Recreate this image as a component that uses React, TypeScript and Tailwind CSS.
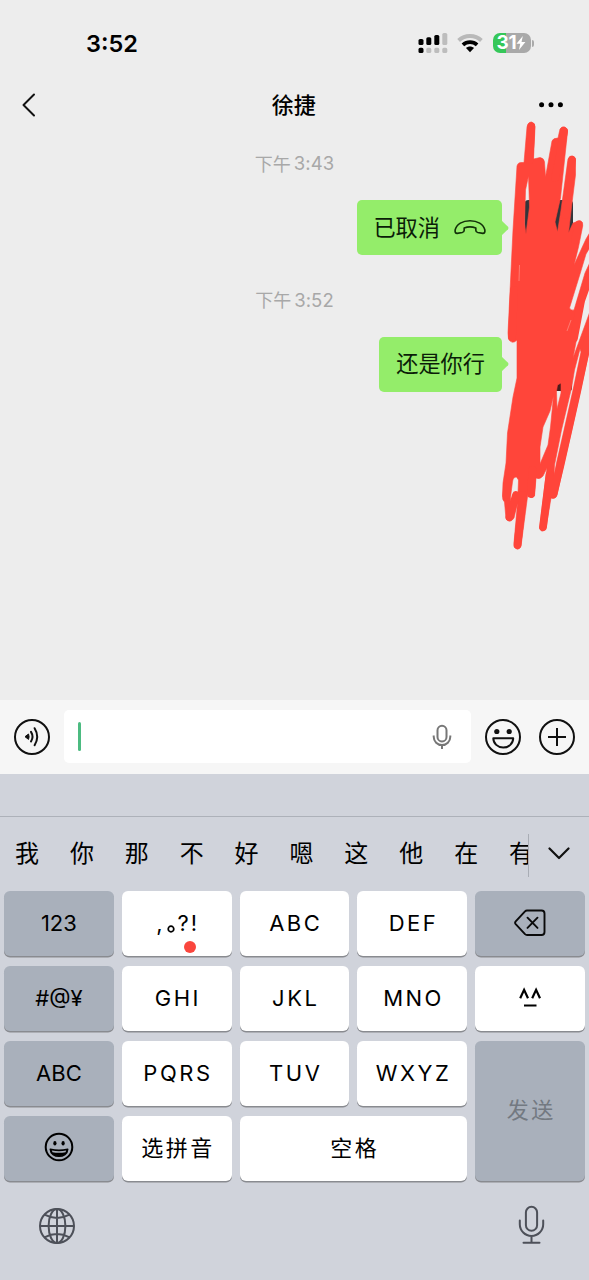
import React from 'react';

const CANDIDATES = ['我', '你', '那', '不', '好', '嗯', '这', '他', '在', '有'];

function StatusBar() {
  return (
    <div className="flex h-[78px] shrink-0 items-start justify-between pr-[55px] pl-[86px]">
      <span className="mt-[30px] text-[23.500px] leading-[28px] font-semibold">3:52</span>
      <div className="mt-[32px] flex items-start">
        <svg className="mt-px" width="30" height="21" viewBox="0 0 30 21">
          <g fill="#000">
            <rect x="0.5" y="6" width="5" height="6" rx="1.6" />
            <rect x="8.3" y="4.2" width="5" height="7.8" rx="1.6" />
            <rect x="16.3" y="2" width="5" height="10" rx="1.6" />
            <rect x="0.5" y="14.8" width="5" height="5.2" rx="1.6" />
          </g>
          <g fill="#bdbdbd">
            <rect x="24.3" y="0" width="5" height="12" rx="1.6" />
            <rect x="8.3" y="14.8" width="5" height="5.2" rx="1.6" />
            <rect x="16.3" y="14.8" width="5" height="5.2" rx="1.6" />
            <rect x="24.3" y="14.8" width="5" height="5.2" rx="1.6" />
          </g>
        </svg>
        <svg className="mt-[2px] ml-[9px]" width="26" height="19" viewBox="0 0 26 19" fill="none">
          <path d="M1.600 6.400C8 .6 18 .6 24.400 6.400" stroke="#b9b9b9" strokeWidth="4" />
          <path d="M5.900 10.900C10 7.200 16 7.200 20.100 10.900" stroke="#000" strokeWidth="3.800" />
          <path d="M9 14c2.300-2 5.700-2 8 0l-4 4.300z" fill="#000" />
        </svg>
        <div className="mt-px ml-[10px] flex h-[20px] w-[38px] items-center justify-center rounded-[7px] bg-linear-to-r from-[#35c759] from-34% to-[#a9a9a9] to-34% text-white">
          <span className="text-[19px] leading-[20px] font-bold tracking-[-0.300px]">31</span>
          <svg width="10" height="14" viewBox="0 0 9 13" fill="#fff">
            <path d="M6.200 0 .3 7.200h3.500L2.600 13l6-7.500H5z" />
          </svg>
        </div>
        <div className="mt-[8px] ml-[1.500px] h-[7px] w-[2px] rounded-r-full bg-[#aaa]" />
      </div>
    </div>
  );
}

function Header() {
  return (
    <div className="flex h-[54px] shrink-0 items-center justify-between pr-[25.500px] pl-[21px]">
      <svg width="16" height="26" viewBox="0 0 16 26" fill="none" stroke="#111" strokeWidth="2" strokeLinecap="round" strokeLinejoin="round">
        <path d="M13 2.500 2.500 13 13 23.500" />
      </svg>
      <h1 className="ml-[11px] text-[22px] leading-[30px] font-medium">徐捷</h1>
      <svg width="24" height="6" viewBox="0 0 24 6">
        <circle cx="2.600" cy="2.800" r="2.500" />
        <circle cx="12" cy="2.800" r="2.500" />
        <circle cx="21.400" cy="2.800" r="2.500" />
      </svg>
    </div>
  );
}

function Time({ value }: { value: string }) {
  return (
    <div className="flex h-[28px] items-center justify-center gap-[3px] text-[18.500px] text-[#a8a8a8]">
      <span className="text-[18px]">下午</span>
      <span className="tracking-[0.100px]">{value}</span>
    </div>
  );
}

function Bubble({ children }: { children: React.ReactNode }) {
  return (
    <div className="flex items-center justify-end pr-[80px]">
      <div className="flex h-[55px] items-center rounded-[5px] bg-[#94ed6a] px-[17px] text-[22.200px] text-[#0b1d08]">
        {children}
      </div>
      <svg className="-ml-px" width="8" height="16" viewBox="0 0 8 16" fill="#94ed6a">
        <path d="M0 0 7 6.700Q8 8 7 9.300L0 16z" />
      </svg>
    </div>
  );
}

function Scribble() {
  return (
    <svg className="pointer-events-none absolute top-0 left-0" width="589" height="600" viewBox="0 0 589 600">
      <rect x="524.500" y="200" width="48.500" height="54" rx="4" fill="#33353a" />
      <rect x="524.500" y="340" width="47.500" height="51" rx="3" fill="#4a1c1c" />
      <path
        fill="#ff453a"
        fillRule="evenodd"
        stroke="#ff453a"
        strokeWidth="0.600"
        strokeLinejoin="round"
        d="M517 166Q518 162 522 162.500L524 162.500 527 127Q528 122 531.500 122 535 123 535 127L533.500 159 540 157.500Q544 158 544.500 162L545.500 177 552 141Q553 138 558 138L560 129Q562 126 565 127 568 129 567.500 132L560.500 198 555 222 557.500 232 561 210 568 159Q570 155 573 156 576 157 575.500 162L575.500 175 572 203 568.500 233 573 223 576 222Q580 219 582.500 222.500L582.700 226 578.500 247 574 265 586 239 592 229V244L586 254 580 274 569.500 308Q571 311 574 310L585 273 592 258V276L588 284 582.500 308 573 358 592 306V343L589 352 580.500 390 571.700 430 564 463 557 495Q555 500 551 498L546 528Q544 532 541.500 531 539 529 540 526L547 468 543 476Q540 480 536 478L534.500 496Q532 499 528.500 496L528 493 521 546Q518 552 514.500 547L514 543 517.500 503 514 518Q510 524 506 519L504.500 502Q502 500 502.500 495L503 483 506 463 507.500 433 513 397 517 378 517 340Q512 345 508.500 339L508 333 513 230Z
        M528.500 176 525.500 190 524.500 224 526 234 529.500 207Z
        M580 349 574.500 370 571.500 388 561.500 430 554.500 465 554 476 556.500 463 564 430 573 390 581 352Z
        M553.500 396 550 411 543 427 540 447 540 464 548 445 550.500 427Z
        M557.500 385 561 383 561 393 557 409 556.500 391Z
        M516.500 477Q513 477 512.500 482L510.500 497 511.500 509 518 493 518.500 480Z"
      />
      <path
        fill="none"
        stroke="#ff453a"
        strokeWidth="7.800"
        strokeLinecap="round"
        strokeLinejoin="round"
        d="M531.300 126.500 529.500 160M564 131 560 155 555 178M572 160 568.500 190 565 215M512 337 514 290M578.500 225 575 240M592 270 581 301 574 338M588 340 577 392 560.500 465 553.500 494M549.500 475 543 527M531 494 532.500 470M517.500 545 523 495M509.500 517 516 495M506.500 495 508 478"
      />
      <path d="m519 281 .5-16M567 331l4-11" stroke="#ff9187" strokeWidth="0.700" />
    </svg>
  );
}

function InputBar() {
  return (
    <div className="flex h-[74px] shrink-0 items-center bg-[#f6f6f6] px-[13px] pb-px">
      <svg width="38" height="38" viewBox="0 0 38 38" fill="none" stroke="#111" strokeWidth="2">
        <circle cx="19" cy="19" r="17" />
        <path d="M15.500 16 12 18.700l3.500 2.700q1.200-2.700 0-5.400Z" fill="#111" strokeWidth="1" strokeLinejoin="round" />
        <path d="M18 13.900q3 4.800 0 9.600M21.600 10.200q5.200 8.500 0 17" strokeLinecap="round" />
      </svg>
      <div className="ml-[13px] flex h-[53px] w-[407px] items-center justify-between rounded-[5px] bg-white pr-[19px] pl-[14px]">
        <div className="h-[29px] w-[2.500px] rounded-full bg-[#4cbb81]" />
        <svg width="20" height="26" viewBox="0 0 20 26" fill="none" stroke="#777" strokeWidth="2">
          <rect x="5.500" y="1.800" width="9" height="15.600" rx="4.500" />
          <path d="M1.700 11.500v1.300a8.300 8.300 0 0 0 16.600 0v-1.300M10 21v4" />
        </svg>
      </div>
      <svg className="ml-[13px]" width="38" height="38" viewBox="0 0 38 38" fill="none" stroke="#111" strokeWidth="2">
        <circle cx="19" cy="19" r="17" />
        <circle cx="12.800" cy="13.500" r="2.600" fill="#111" stroke="none" />
        <circle cx="25.200" cy="13.500" r="2.600" fill="#111" stroke="none" />
        <path d="M9.300 20.300h19.900a9.950 9.300 0 0 1-19.900 0Z" strokeLinejoin="round" />
      </svg>
      <svg className="ml-[16px]" width="38" height="38" viewBox="0 0 38 38" fill="none" stroke="#111" strokeWidth="2">
        <circle cx="19" cy="19" r="17" />
        <path d="M19 10v18M10 19h18" />
      </svg>
    </div>
  );
}

function Key({ children, gray = false, className = '' }: { children: React.ReactNode; gray?: boolean; className?: string }) {
  return (
    <div
      className={`flex items-center justify-center rounded-[6px] text-[22px] shadow-[0_1.500px_0_#898b90] ${gray ? 'bg-[#a9b0bb]' : 'bg-white'} ${className}`}
    >
      {children}
    </div>
  );
}

function Letters({ children }: { children: string }) {
  return <span className="-mr-[2.500px] tracking-[2.500px]">{children}</span>;
}

function Keyboard() {
  return (
    <div className="flex flex-1 flex-col bg-[#d0d3db]">
      <div className="h-[43px] shrink-0 border-b border-[#adb1b9]" />
      <div className="flex h-[73.500px] shrink-0 items-center">
        <div className="flex w-[528px] gap-[30.900px] overflow-hidden pl-[15px] text-[24px] leading-[36px]">
          {CANDIDATES.map((c) => (
            <span key={c} className="w-[24px] shrink-0">{c}</span>
          ))}
        </div>
        <div className="mt-[4px] h-[43px] w-px bg-[#a9adb5]" />
        <svg className="ml-[19px]" width="22" height="14" viewBox="0 0 22 14" fill="none" stroke="#111" strokeWidth="2.200" strokeLinecap="round" strokeLinejoin="round">
          <path d="m1.500 1.500 9.500 9.500 9.500-9.500" />
        </svg>
      </div>
      <div className="grid shrink-0 grid-cols-5 grid-rows-[repeat(4,65px)] gap-x-[8px] gap-y-[10px] px-[4px]">
        <Key gray>123</Key>
        <Key>
          <div className="relative flex h-full w-full items-center justify-center">
            <span className="-mr-[2px] tracking-[2px]">,</span>
            <svg className="mt-[11px] mr-[3px] ml-[4px]" width="8" height="8" viewBox="0 0 8 8" fill="none" stroke="#000" strokeWidth="1.700">
              <circle cx="4" cy="4" r="2.800" />
            </svg>
            <span className="-mr-[2px] tracking-[2px]">?!</span>
            <i className="absolute top-[50px] left-[62px] size-[12px] rounded-full bg-[#fa463d]" />
          </div>
        </Key>
        <Key><Letters>ABC</Letters></Key>
        <Key><Letters>DEF</Letters></Key>
        <Key gray>
          <svg width="32" height="28" viewBox="0 0 32 28" fill="none" stroke="#0a0a0a" strokeWidth="1.900" strokeLinecap="round" strokeLinejoin="round">
            <path d="M13 1.500h14.500a3 3 0 0 1 3 3v18.500a3 3 0 0 1-3 3H13q-1.200 0-2-.8L1.700 15.200q-1.200-1.400 0-2.800L11 2.300q.8-.8 2-.8Z" />
            <path d="m13.500 8.700 10 10.200M23.500 8.700l-10 10.200" />
          </svg>
        </Key>
        <Key gray>#@¥</Key>
        <Key><Letters>GHI</Letters></Key>
        <Key><Letters>JKL</Letters></Key>
        <Key><Letters>MNO</Letters></Key>
        <Key>
          <svg className="mr-px" width="24" height="22" viewBox="0 0 24 22" fill="none" stroke="#000" strokeWidth="2.200">
            <path d="m2.200 11.300 3.900-8.500L10 11.300M14.200 11.300l3.900-8.500 3.900 8.500M6 18.500h12.500" />
          </svg>
        </Key>
        <Key gray>ABC</Key>
        <Key><Letters>PQRS</Letters></Key>
        <Key><Letters>TUV</Letters></Key>
        <Key><Letters>WXYZ</Letters></Key>
        <Key gray className="row-span-2 text-[#737981]"><Letters>发送</Letters></Key>
        <Key gray className="pb-[2px]">
          <svg width="30" height="30" viewBox="0 0 30 30" fill="none" stroke="#000" strokeWidth="2">
            <circle cx="15" cy="15" r="13.300" />
            <ellipse cx="10.900" cy="11.300" rx="1.600" ry="2.200" fill="#000" stroke="none" />
            <ellipse cx="19.100" cy="11.300" rx="1.600" ry="2.200" fill="#000" stroke="none" />
            <path d="M6.300 17.300q8.700 2 17.400 0c-.4 9.300-17 9.300-17.400 0Z" fill="#000" strokeWidth="1.600" strokeLinejoin="round" />
            <path d="M7.800 18.500q7.200 1.400 14.400 0l-.7 1.800q-6.500 1-13 0Z" fill="#a9b0bb" stroke="none" />
          </svg>
        </Key>
        <Key><Letters>选拼音</Letters></Key>
        <Key className="col-span-2"><Letters>空格</Letters></Key>
      </div>
      <div className="flex items-start justify-between pt-[24.500px] pr-[44px] pl-[38px]">
        <svg className="mt-[2px]" width="38" height="38" viewBox="0 0 38 38" fill="none" stroke="#4d5059" strokeWidth="2">
          <circle cx="19" cy="19" r="17" />
          <ellipse cx="19" cy="19" rx="8.400" ry="17" />
          <path d="M19 2v34M2 19h34M6.500 7.700q12.500 6.600 25 0M6.500 30.300q12.500-6.600 25 0" />
        </svg>
        <svg width="27" height="40" viewBox="0 0 27 40" fill="none" stroke="#4d5059" strokeWidth="2" strokeLinecap="round">
          <rect x="7.900" y="1.800" width="11.200" height="24" rx="5.600" />
          <path d="M1.800 15.500v3.700a11.700 11.700 0 0 0 23.400 0v-3.700M13.500 31v6.700M5.500 37.800h16" />
        </svg>
      </div>
    </div>
  );
}

export default function App() {
  return (
    <div className="relative flex h-[1280px] w-[589px] flex-col overflow-hidden bg-[#ededed] font-['Inter','Noto_Sans_CJK_SC',sans-serif] text-black">
      <StatusBar />
      <Header />
      <div className="flex h-[568px] shrink-0 flex-col pt-[18px]">
        <Time value="3:43" />
        <div className="mt-[22px]">
          <Bubble>
            <span className="-ml-px">已取消</span>
            <svg className="-mr-px ml-[14px]" width="32" height="17" viewBox="0 0 33 17" fill="none" stroke="#123109" strokeWidth="1.700" strokeLinejoin="round">
              <path d="M1.200 11C2.500 5 9 1.500 16.500 1.500S30.500 5 31.800 11q.5 3.500-2 3.500l-5.300-.8q-2-.4-2-2.300V9q-6-2.400-12 0v2.400q0 1.900-2 2.300l-5.300.8Q.7 14.500 1.200 11Z" />
            </svg>
          </Bubble>
        </div>
        <div className="mt-[31.500px]">
          <Time value="3:52" />
        </div>
        <div className="mt-[22px]">
          <Bubble>还是你行</Bubble>
        </div>
      </div>
      <InputBar />
      <Keyboard />
      <Scribble />
    </div>
  );
}
